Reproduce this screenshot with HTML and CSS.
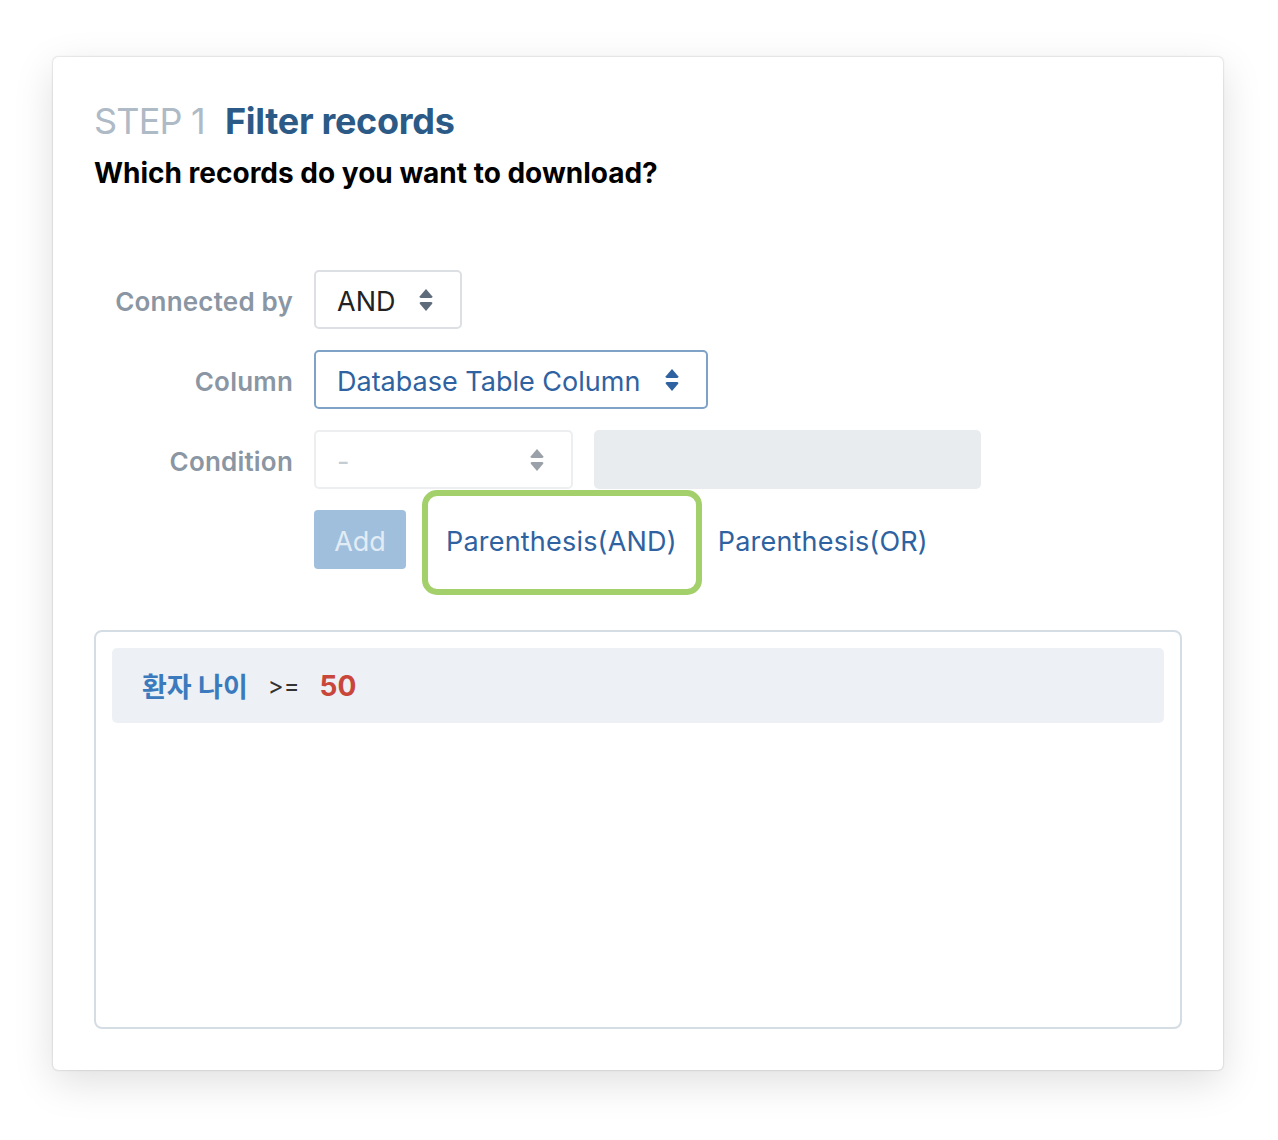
FILE: index.html
```html
<!DOCTYPE html>
<html>
<head>
<meta charset="utf-8">
<link rel="stylesheet" href="styles.css">
</head>
<body>
<div class="card">
  <h1 class="title"><span class="step">STEP 1</span><span class="name">Filter records</span></h1>
  <p class="question">Which records do you want to download?</p>
  <div class="form">
    <div class="row">
      <label class="label">Connected by</label>
      <div class="select sel-and"><span class="val dark">AND</span><svg class="arrows dark-a" width="14" height="24" viewBox="0 0 14 24"><path d="M7 1 L13.2 8.2 Q14 10 12 10 H2 Q0 10 0.8 8.2 Z"/><path d="M7 23 L13.2 15.8 Q14 14 12 14 H2 Q0 14 0.8 15.8 Z"/></svg></div>
    </div>
    <div class="row">
      <label class="label">Column</label>
      <div class="select sel-col"><span class="val blue">Database Table Column</span><svg class="arrows blue-a" width="14" height="24" viewBox="0 0 14 24"><path d="M7 1 L13.2 8.2 Q14 10 12 10 H2 Q0 10 0.8 8.2 Z"/><path d="M7 23 L13.2 15.8 Q14 14 12 14 H2 Q0 14 0.8 15.8 Z"/></svg></div>
    </div>
    <div class="row">
      <label class="label">Condition</label>
      <div class="select sel-cond"><span class="val muted">-</span><svg class="arrows gray-a" width="14" height="24" viewBox="0 0 14 24"><path d="M7 1 L13.2 8.2 Q14 10 12 10 H2 Q0 10 0.8 8.2 Z"/><path d="M7 23 L13.2 15.8 Q14 14 12 14 H2 Q0 14 0.8 15.8 Z"/></svg></div>
      <div class="input"></div>
    </div>
    <div class="row">
      <span class="label"></span>
      <div class="buttons">
        <button class="btn-add">Add</button>
        <span class="link highlighted">Parenthesis(AND)</span>
        <span class="link">Parenthesis(OR)</span>
      </div>
    </div>
  </div>
  <div class="results">
    <div class="item"><span class="col">환자 나이</span><span class="op">&gt;=</span><span class="num">50</span></div>
  </div>
</div>
</body>
</html>
```
FILE: styles.css
```css
* { box-sizing: border-box; }
body {
  margin: 0;
  background: #fff;
  font-family: Inter, "Noto Sans CJK KR", sans-serif;
  width: 1278px;
  height: 1140px;
  overflow: hidden;
}
.card {
  margin: 57px 0 0 53px;
  width: 1170px;
  height: 1013px;
  background: #fff;
  border-radius: 5px;
  box-shadow: 0 0 2px rgba(0,0,0,0.28), 0 12px 40px rgba(0,0,0,0.13);
  padding: 42px 41px 40px 41px;
}
.title {
  margin: 0;
  font-size: 36px;
  line-height: 44px;
  font-weight: 700;
  display: flex;
  gap: 20px;
}
.step { color: #aebac6; font-weight: 400; letter-spacing: -0.8px; }
.name { color: #2b5a87; letter-spacing: -0.3px; }
.question {
  margin: 13px 0 0 0;
  font-size: 28px;
  line-height: 34px;
  font-weight: 700;
  color: #000;
  letter-spacing: 0px;
}
.form {
  margin-top: 80px;
  display: flex;
  flex-direction: column;
  gap: 21px;
}
.row { display: flex; align-items: center; gap: 21px; }
.label {
  width: 199px;
  text-align: right;
  font-size: 26px;
  font-weight: 600;
  color: #8a96a3;
  letter-spacing: 0.2px;
  padding-top: 3px;
}
.select {
  height: 59px;
  border: 2px solid #dcdfe3;
  border-radius: 5px;
  display: flex;
  align-items: center;
  justify-content: space-between;
  padding: 3px 27px 0 21px;
  font-size: 27px;
}
.sel-and { width: 148px; }
.sel-col { width: 394px; border-color: #7ea3c7; }
.sel-cond { width: 259px; border-color: #eceef0; }
.val.dark { color: #222; }
.val.blue { color: #2e62a0; }
.val.muted { color: #c4ccd4; }
.arrows { display: block; margin-top: -3px; }
.dark-a { fill: #5e6b7a; }
.blue-a { fill: #2e62a0; }
.gray-a { fill: #9aa1a9; }
.input {
  width: 387px; height: 59px;
  background: #e8ecef;
  border-radius: 5px;
}
.buttons { display: flex; align-items: center; height: 59px; }
.btn-add {
  width: 92px; height: 59px;
  border: none;
  border-radius: 4px;
  background: #9fbfdd;
  color: #e2ecf5;
  font-family: inherit;
  font-size: 27px;
  padding: 3px 0 0 0;
}
.link {
  font-size: 27px;
  color: #2e62a0;
  margin-left: 41px;
  letter-spacing: 0.2px;
  padding-top: 4px;
}
.link.highlighted {
  margin-left: 40px;
  position: relative;
}
.link.highlighted::after {
  content: "";
  position: absolute;
  left: -24px;
  right: -25px;
  top: -31px;
  bottom: -37px;
  border: 6px solid #a3d06b;
  border-radius: 15px;
}
.results {
  margin-top: 61px;
  height: 399px;
  border: 2px solid #d4dce4;
  border-radius: 8px;
  padding: 16px;
}
.item {
  height: 75px;
  background: #edf1f5;
  border-radius: 5px;
  display: flex;
  align-items: center;
  padding-left: 30px;
  font-size: 27px;
}
.col { color: #3a7abd; font-weight: 700; }
.op { color: #333; margin-left: 20px; font-size: 24px; }
.num { color: #c9463b; font-weight: 700; margin-left: 20px; font-size: 28px; }
```
